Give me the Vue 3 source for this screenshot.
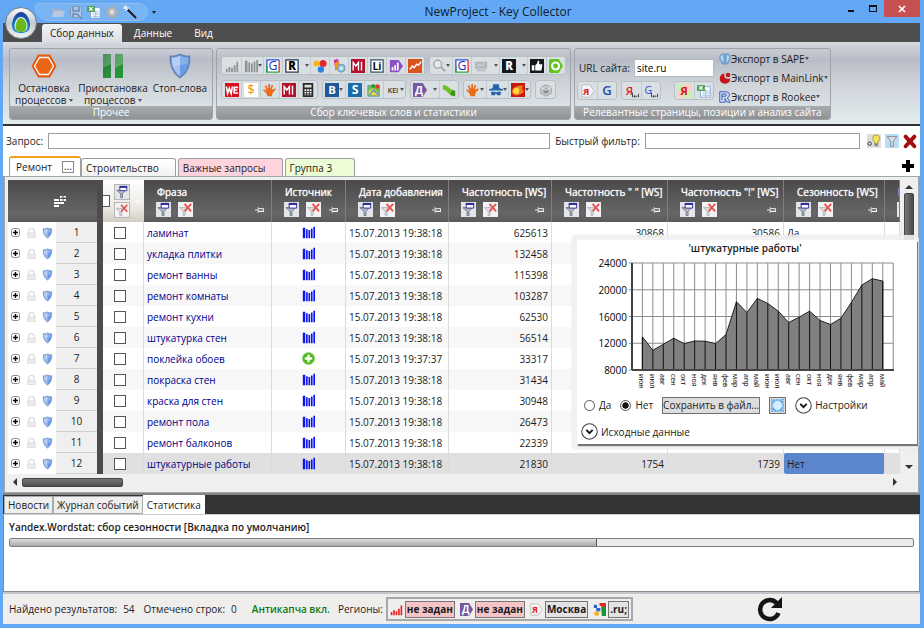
<template>
  <div class="window">
    <header class="titlebar">
      <button class="orb" aria-label="Меню"><Icon name="orb" /></button>
      <div class="quick">
        <button aria-label="Открыть"><Icon name="open" /></button>
        <button aria-label="Сохранить"><Icon name="save" /></button>
        <button aria-label="Экспорт"><Icon name="excel" /></button>
        <button aria-label="Настройки"><Icon name="gear" /></button>
        <button aria-label="Мастер"><Icon name="wand" /></button>
      </div>
      <button class="overflow" aria-label="Ещё"><i class="arrow"></i></button>
      <h1>NewProject - Key Collector</h1>
      <div class="controls">
        <button aria-label="Свернуть"><span class="min"></span></button>
        <button aria-label="Развернуть"><span class="max"></span></button>
        <button class="close" aria-label="Закрыть"><Icon name="close" /></button>
      </div>
    </header>

    <nav class="menu">
      <button class="active">Сбор данных</button>
      <button>Данные</button>
      <button>Вид</button>
    </nav>

    <section class="ribbon">
      <div class="group">
        <div class="group-body big">
          <button>
            <Icon name="stop" />
            <span>Остановка<br>процессов <i class="arrow"></i></span>
          </button>
          <button>
            <Icon name="pause" />
            <span>Приостановка<br>процессов <i class="arrow"></i></span>
          </button>
          <button>
            <Icon name="shield" />
            <span>Стоп-слова</span>
          </button>
        </div>
        <div class="caption">Прочее</div>
      </div>

      <div class="group">
        <div class="group-body tools">
          <div v-for="(row, r) in toolRows" :key="r" class="tool-row">
            <div v-for="(strip, s) in row" :key="s" class="strip">
              <button v-for="(item, t) in strip" :key="t" :class="item.kind" :aria-label="item.label">
                <Icon :name="item.icon" :class="item.tint" />
                <i v-if="item.kind" class="arrow"></i>
              </button>
            </div>
          </div>
        </div>
        <div class="caption">Сбор ключевых слов и статистики</div>
      </div>

      <div class="group">
        <div class="group-body site">
          <div class="site-left">
            <div class="url">
              <label for="site-url">URL сайта:</label>
              <input id="site-url" v-model="siteUrl" type="text">
            </div>
            <div class="tool-row">
              <div class="strip">
                <button aria-label="Яндекс"><Icon name="yandex" /></button>
                <button aria-label="Google"><Icon name="gplain" /></button>
              </div>
              <div class="strip">
                <button aria-label="Позиции Яндекс"><Icon name="yapos" /></button>
                <button aria-label="Позиции Google"><Icon name="gpos" /></button>
              </div>
              <div class="strip last">
                <button aria-label="Анализ"><Icon name="yagreen" /></button>
                <button aria-label="Excel"><Icon name="excel" /></button>
              </div>
            </div>
          </div>
          <div class="exports">
            <button v-for="item in exportsList" :key="item.icon">
              <Icon :name="item.icon" />{{ item.text }}<i class="arrow"></i>
            </button>
          </div>
        </div>
        <div class="caption">Релевантные страницы, позиции и анализ сайта</div>
      </div>
    </section>

    <div class="search">
      <label for="query">Запрос:</label>
      <input id="query" v-model="query" type="text" class="query">
      <label for="quick-filter">Быстрый фильтр:</label>
      <input id="quick-filter" v-model="quickFilter" type="text" class="quick-filter">
      <div class="search-tools">
        <button aria-label="Подсказка"><Icon name="bulb" /></button>
        <button aria-label="Фильтр"><Icon name="funnel" /></button>
        <button aria-label="Сбросить"><Icon name="cross" /></button>
      </div>
    </div>

    <div class="pages">
      <button class="page current">Ремонт <span class="dots">...</span></button>
      <button class="page">Строительство</button>
      <button class="page pink">Важные запросы</button>
      <button class="page green">Группа 3</button>
      <button class="add" aria-label="Добавить"><Icon name="plus" /></button>
    </div>

    <main class="frame">
      <div class="grid">
        <div class="pane">
          <table>
            <colgroup>
              <col class="c-tools">
              <col class="c-num">
              <col class="c-gap">
              <col class="c-check">
              <col class="c-phrase">
              <col class="c-source">
              <col class="c-date">
              <col class="c-freq">
              <col class="c-wide">
              <col class="c-wide">
              <col class="c-season">
              <col>
            </colgroup>
            <thead>
              <tr>
                <th colspan="2" class="corner"><Icon name="grouping" /></th>
                <th class="gap"></th>
                <th class="check-head">
                  <div class="check-box">
                    <input type="checkbox" aria-label="Выделить все">
                    <span class="stack">
                      <Icon name="filter" />
                      <Icon name="nofilter" />
                    </span>
                    <Icon name="pin" class="pale-pin" />
                  </div>
                </th>
                <th v-for="col in columns" :key="col">
                  <div class="head-text">{{ col }}</div>
                  <div class="head-tools">
                    <Icon name="filter" />
                    <Icon name="nofilter" />
                    <Icon name="pin" class="pin" />
                  </div>
                </th>
              </tr>
            </thead>
            <tbody>
              <tr v-for="(row, i) in rows" :key="row.phrase" :class="{ selected: i === 11 }">
                <td class="row-tools">
                  <span>
                    <Icon name="expand" class="expand" />
                    <Icon name="lock" class="lock" />
                    <Icon name="shield" class="shield" />
                  </span>
                </td>
                <td class="num">{{ i + 1 }}</td>
                <td class="gap"></td>
                <td class="check"><input type="checkbox" :aria-label="row.phrase"></td>
                <td class="phrase">{{ row.phrase }}</td>
                <td class="source"><Icon :name="row.added ? 'addsource' : 'bars2'" /></td>
                <td>{{ row.date }}</td>
                <td class="right">{{ row.ws }}</td>
                <td class="right">{{ row.quoted }}</td>
                <td class="right">{{ row.exact }}</td>
                <td :class="{ focus: i === 11 }">{{ row.season }}</td>
                <td></td>
              </tr>
            </tbody>
          </table>
        </div>
        <div class="vscroll">
          <i class="tri up"></i>
          <span class="vthumb"></span>
          <i class="tri down"></i>
        </div>
      </div>
      <div class="hscroll">
        <i class="tri left"></i>
        <span class="hthumb"></span>
        <i class="tri next"></i>
      </div>

      <aside class="popup">
        <div class="card">
          <h2>'штукатурные работы'</h2>
          <svg class="chart" viewBox="0 0 320 136" width="320" height="136">
            <g v-for="tick in yTicks" :key="tick">
              <line x1="40" x2="304" :y1="yPos(tick)" :y2="yPos(tick)" class="line" />
              <text x="38" :y="yPos(tick) + 4" class="y-label">{{ tick }}</text>
            </g>
            <line v-for="n in 25" :key="n" :x1="xPos(n - 1)" :x2="xPos(n - 1)" y1="6" y2="113" class="line" />
            <polygon :points="area" class="area" />
            <line v-for="n in 24" :key="'d' + n" :x1="xPos(n - 1)" :x2="xPos(n - 1)" :y1="yPos(history[n - 1])" y2="113" class="drop" />
            <line x1="43" x2="43" y1="6" y2="113" class="axis" />
            <line x1="43" x2="305" y1="113" y2="113" class="axis" />
            <text v-for="n in 24" :key="'m' + n" :transform="`translate(${xPos(n - 1) - 3} 117) rotate(90)`" class="x-label">{{ months[(n - 1) % 12] }}</text>
          </svg>
          <div class="options">
            <label><input v-model="seasonal" type="radio" value="yes">Да</label>
            <label><input v-model="seasonal" type="radio" value="no">Нет</label>
            <button class="save">Сохранить в файл...</button>
            <button class="fit" aria-label="Масштаб"><Icon name="fit" /></button>
            <button class="expander"><Icon name="chevron" />Настройки</button>
          </div>
          <button class="expander source-data"><Icon name="chevron" />Исходные данные</button>
        </div>
      </aside>
    </main>

    <nav class="bottom-tabs">
      <button>Новости</button>
      <button>Журнал событий</button>
      <button class="active">Статистика</button>
    </nav>
    <section class="stats">
      <p>Yandex.Wordstat: сбор сезонности [Вкладка по умолчанию]</p>
      <div class="progress"><span :style="{ width: progress + '%' }"></span></div>
    </section>

    <footer class="status">
      <span>Найдено результатов:</span><span class="count">54</span>
      <span>Отмечено строк:</span><span class="count">0</span>
      <strong>Антикапча вкл.</strong>
      <span>Регионы:</span>
      <div class="regions">
        <template v-for="(region, i) in regions" :key="i">
          <Icon :name="region.icon" :class="region.tint" />
          <button :class="{ unset: region.unset }">{{ region.text }}</button>
        </template>
      </div>
      <button class="refresh" aria-label="Обновить"><Icon name="refresh" /></button>
    </footer>
  </div>
</template>

<script setup>
import { ref, computed, h } from 'vue';

const letter = (text, size, fill, x = 8, y = 13, weight = 700) =>
  `<text x="${x}" y="${y}" text-anchor="middle" font-size="${size}" font-weight="${weight}" fill="${fill}">${text}</text>`;

// Most icons use a 16x16 box, the others bring their own
const boxes = {
  orb: '0 0 32 32',
  stop: '0 0 26 26',
  pause: '0 0 26 26',
  refresh: '0 0 26 26',
  shield: '0 0 16 20',
  open: '0 0 14 14',
  save: '0 0 14 14',
  gear: '0 0 14 14',
  wand: '0 0 14 14',
  plus: '0 0 14 14',
  fit: '0 0 14 14',
  grouping: '0 0 12 12',
  pin: '0 0 10 8',
  expand: '0 0 9 9',
  close: '0 0 8 8',
};

const icons = {
  orb: `<linearGradient id="orbFill" x2="0" y2="1"><stop offset="0" stop-color="#fdfdfd"/><stop offset=".5" stop-color="#c4cad2"/><stop offset="1" stop-color="#f2f4f6"/></linearGradient>
    <linearGradient id="eggFill" x2="0" y2="1"><stop offset="0" stop-color="#1c3f9c"/><stop offset="1" stop-color="#1593cc"/></linearGradient>
    <circle cx="16" cy="16" r="15.5" fill="url(#orbFill)" stroke="#6f7a88"/>
    <path fill="url(#eggFill)" d="M16 5c5 0 9 7 9 13s-4 8-9 8-9-2-9-8S11 5 16 5z"/>
    <path fill="#e9f4fa" d="M16 10c4 0 6.500 5 6.500 9s-2.500 6-6.500 6-6.500-2-6.500-6S12 10 16 10z"/>
    <path fill="#69b61f" d="M16 11c3 0 5.500 4 5.500 8S19 25 16 25s-5.500-1-5.500-5 2.500-9 5.500-9z"/>`,
  open: '<path fill="#9bb4d2" d="M1 3h4l1 1h6v8H1z"/><path fill="#b5cae2" d="M3 6h11l-2 6H1z"/>',
  save: '<path fill="#a9c6e6" stroke="#7d9cc2" d="M1.500 1.500h11v11h-11z"/><path stroke="#6f8bb0" stroke-width="1.500" fill="none" d="M4 2v4h6V2M4 12V9h4M8 9l5 5"/>',
  gear: '<circle cx="7" cy="7" r="5.500" fill="none" stroke="#a7adae" stroke-width="2.500" stroke-dasharray="2.300 1.200"/><circle cx="7" cy="7" r="3.300" fill="#dfe6ea" stroke="#b4babc" stroke-width="2.500"/>',
  wand: '<path stroke="#1c1c1c" stroke-width="2" d="M4 4l9 9"/><path stroke="#fff" d="M3 0v6M0 3h6M1 1l4 4"/>',
  close: '<path stroke="#fff" stroke-width="1.600" d="M1 1l6 6M7 1L1 7"/>',
  stop: '<path fill="#e8590c" d="M7 1.500h12L25.500 13 19 24.500H7L.5 13z"/><path fill="#ea6416" stroke="#fff" stroke-width="1.300" d="M8.500 4.500h9L22.500 13l-5 8.500h-9L3.500 13z"/>',
  pause: `<linearGradient id="pauseFill" x2="1" y2="1"><stop offset="0" stop-color="#1a6b2c"/><stop offset=".5" stop-color="#2f8c40"/><stop offset="1" stop-color="#1c9a34"/></linearGradient>
    <path fill="url(#pauseFill)" d="M3 1h8v24H3zM15 1h8v24h-8z"/><path fill="#fff" opacity=".22" d="M3 1h8v10l-8 4zM15 1h8v10l-8 4z"/>`,
  shield: `<path fill="#6b9be4" stroke="#5c7fb4" d="M8 1q4 2 7.500 1.500Q16 14 8 19 0 14 .5 2.500 4 3 8 1z"/>
    <path fill="#fff" opacity=".4" d="M8 2v16Q1.500 13 1.500 3.500 5 4 8 2z"/><path fill="#fff" opacity=".2" d="M2 3.500Q6 4 8 2q3 2 6 1.500V8L2 11z"/>`,
  bars: '<path fill="currentColor" d="M1 11h2v4H1zM4 9h2v6H4zM7 10h2v5H7zM10 7h2v8h-2zM13 3h2v12h-2z"/>',
  bars2: '<path fill="currentColor" d="M1 2h3v13H1zM5 4h2v11H5zM8 5h2v10H8zM11 3h2v12h-2zM14 1h2v14h-2z"/>',
  google: `<path fill="#fff" d="M1 1h14v14H1z"/><path fill="none" stroke="#2f55d4" stroke-width="1.500" d="M15 1H1v14"/>
    <path fill="none" stroke="#2aa64a" stroke-width="1.500" d="M1 8v7h14"/><path stroke="#cf3b35" stroke-width="1.500" d="M15 1v14"/>${letter('G', 14, '#1a2fb8', 8, 13, 400)}`,
  r: `<path fill="#fff" stroke="#24384c" stroke-width="1.400" d="M1 1h14v14H1z"/>${letter('R', 13, '#000', 8, 13, 800)}`,
  rdark: `<path fill="#101820" d="M0 0h16v16H0z"/>${letter('R', 13, '#fff', 8, 13, 800)}`,
  dots: '<circle cx="4" cy="5" r="3.400" fill="#f8b414"/><circle cx="11.500" cy="5" r="4" fill="#e02a2a"/><circle cx="9" cy="12" r="3.600" fill="#2f7fe0"/>',
  palette: '<path fill="#d0318e" d="M2 1l5-1 2 9-5 4z"/><path fill="#f09a18" d="M3 5l4-3 2 8-5 3z"/><circle cx="10.500" cy="10.500" r="4.500" fill="#9cc5e4" stroke="#5a8cae"/><circle cx="10.500" cy="10.500" r="1.500" fill="#dff"/>',
  mi: '<path fill="#b0122c" d="M0 0h16v16H0z"/><path fill="none" stroke="#fff" stroke-width="1.600" d="M2.500 13V4l3 4 3-4v9M12 3v10"/>',
  li: `<path fill="#fff" stroke="#355068" stroke-width="1.400" d="M1 1h14v14H1z"/>${letter('Li', 12, '#111')}`,
  metrika: '<path fill="#8a4fc4" d="M1 1h10l5 7-5 7H1z"/><path fill="#fff" d="M3 9h2v4H3zM6 7h2v6H6zM9 4h2v9H9z"/>',
  trend: '<path fill="#d9541c" d="M0 0h16v16H0z"/><path fill="none" stroke="#fff" stroke-width="1.600" d="M2 12l3-4 2 2 3-4 2 1 3-4"/>',
  search: '<circle cx="6.500" cy="6" r="4.500" fill="#e6eaec" stroke="#a4a8ac" stroke-width="1.600"/><path stroke="#a4a8ac" stroke-width="2.400" d="M10 9l5 5"/>',
  faded: '<path fill="#b4b9bd" d="M1 3h14v8H1zM3 12h10v2H3z"/><path fill="none" stroke="#e3e7e9" d="M3 9l3-3 2 2 4-3"/>',
  thumb: '<path fill="#15181b" d="M0 0h16v16H0z"/><path fill="#fff" d="M2 7h3v6H2zM6 7l2-2 1-3h1.500v4H14v2l-1 5H6z"/>',
  target: '<path fill="#62c41a" d="M0 2q0-2 2-2h9l5 8-5 8H2q-2 0-2-2z"/><circle cx="7.500" cy="8" r="4" fill="none" stroke="#fff" stroke-width="2.400"/>',
  we: '<path fill="#d8101e" d="M0 0h16v16H0z"/><path fill="none" stroke="#fff" stroke-width="1.800" d="M1.500 4l1.500 8 2-6 2 6L8.500 4M15 5h-4.500v6.500H15M10.500 8H14"/>',
  dollar: `<path fill="#fff" d="M0 0h16v16H0z"/>${letter('$', 15, '#f08a10', 8, 13, 400)}`,
  hand: '<path fill="#ec6a14" d="M5 15L4 12 0 8l1-1 3 2-2-6 1.500-.5L6 7V1h2v6l2-5 1.500.5L10 8l4-2 .5 1.500L11 11l-1 4z"/>',
  calc: '<path fill="#2a2a2a" d="M2 0h12v16H2z"/><path fill="#d9e2d4" d="M4 2h8v3H4z"/><path fill="#fff" d="M4 7h2v2H4zM7 7h2v2H7zM10 7h2v2h-2zM4 10h2v2H4zM7 10h2v2H7zM10 10h2v2h-2zM4 13h2v1H4zM7 13h2v1H7zM10 13h2v1h-2z"/>',
  b: `<path fill="#1f5a98" d="M0 0h16v16H0z"/>${letter('B', 13, '#fff')}`,
  s: `<path fill="#1a6cab" d="M0 0h16v16H0z"/>${letter('S', 14, '#fff')}`,
  map: '<path fill="#7cc142" stroke="#4a8fc0" d="M1 3h13v12H1z"/><path fill="#f3d348" d="M2 9l5-3 6 5v3H2z"/><path fill="none" stroke="#4a8fd8" stroke-width="1.500" d="M3 14l4-6 6 5"/><circle cx="7" cy="3.500" r="2.500" fill="#2f9e3a"/><circle cx="12" cy="4" r="2.500" fill="#e33a2e"/>',
  kei: letter('KEI', 8, '#333', 8, 11, 600),
  direct: `<path fill="#76569e" d="M0 0h11l5 8-5 8H0z"/>${letter('Д', 12, '#fff', 7, 12)}`,
  leaf: '<path fill="#6cc424" d="M1 2q5 1 8 4 3 3 6 3v6q-5 0-8-4-3-3-6-4z"/><path fill="#3d9416" d="M9 13q3 2 6 2V9l-3-1z"/>',
  spy: '<path fill="#2166ae" d="M4 6l1-5h2l1 1 1-1h2l1 5 4 1v1.500H0V7zM2 10h5l1 1 1-1h5l-1 4H9.500L8 12l-1.500 2H3z"/>',
  fire: '<path fill="#c31a12" d="M0 0h16v16H0z"/><path fill="#f6791a" d="M1 9q3-7 14-6-3 1-2 4l2 3q-5 5-10 4-4-1-4-5z"/><circle cx="6" cy="9" r="3.500" fill="#ffd744"/>',
  box: '<path fill="#c6cacd" stroke="#9a9ea2" d="M8 2l6 3v7l-6 3-6-3V5z"/><circle cx="8" cy="9" r="3" fill="#8d9195"/><path stroke="#eee" d="M2 5l6 3 6-3" fill="none"/>',
  yandex: `<path fill="#f6f6f6" stroke="#b9b9b9" d="M1 1h9l5 7-5 7H1z"/>${letter('Я', 11, '#e01c1c', 6, 12)}`,
  gplain: letter('G', 15, '#1c4fa8', 8, 13, 600),
  yapos: `${letter('Я', 13, '#e01c1c', 5, 12, 600)}<path fill="#333" d="M8 10h1v5H8zM10 13h2v2h-2zM13 13h1v2h-1zM15 11h1v4h-1z"/>`,
  gpos: `${letter('G', 12, '#2c4ee0', 5, 11, 400)}<path fill="#333" d="M8 10h1v5H8zM10 13h2v2h-2zM13 13h1v2h-1zM15 11h1v4h-1z"/>`,
  yagreen: `<path fill="#fbd0c8" d="M0 0h16v16H0z"/><path fill="#c9f0b0" d="M0 0h8v8H0zM8 8h8v8H8z"/>${letter('Я', 13, '#d8141c')}`,
  excel: '<path fill="#fff" stroke="#7fa6d4" d="M4 3h11v12H4z"/><path stroke="#9dbbe0" d="M6 8h8M6 10.500h8M6 13h8M10 6v9"/><path fill="#4fa458" d="M0 1h9v7H0z"/><path stroke="#fff" stroke-width="1.400" d="M2.500 2.500l4 4M6.500 2.500l-4 4"/>',
  sape: '<path fill="#8fc0e8" stroke="#4a84bc" d="M7 1Q1 1 1 6q0 3 2 5 0 4 4 4zM9 1q6 0 6 5 0 3-2 5 0 4-4 4z"/><path fill="none" stroke="#eef6fd" d="M4 4v4l2 2M12 4v4l-2 2"/>',
  mainlink: '<path fill="#c4141c" d="M7 2v4q1 3 4 3h4q0 6-7 6.500Q1 15 1 9q0-6 6-7z"/><circle cx="12" cy="4" r="3" fill="#c4141c"/>',
  rookee: '<path fill="none" stroke="#3b62c4" stroke-width="1.300" d="M1 1h8q5 0 5 4 0 3-3 4l4 6h-4L8 10v5H1zM4 4v8M4 4h4q2 0 2 1.500T8 7H4"/>',
  bulb: '<path fill="#dedede" d="M0 0h16v16H0z"/><path fill="#f7e25c" stroke="#a89438" d="M10.500 1q4 0 4 4 0 2-2 4v2h-4V9q-2-2-2-4 0-4 4-4z"/><path fill="#888" d="M8.500 11h4v3h-4z"/><circle cx="3" cy="11" r="2" fill="none" stroke="#222"/>',
  funnel: '<path fill="#b8def4" d="M0 0h16v16H0z"/><path fill="#dfe3e6" stroke="#7c858c" d="M2.500 3h11l-4 5v6h-3V8z"/>',
  cross: '<path stroke="#a30d10" stroke-width="4.500" stroke-linecap="round" d="M3 3l10 11M13 3L3 14"/>',
  plus: '<path fill="#000" d="M5 1h4v4h4v4H9v4H5V9H1V5h4z"/>',
  grouping: '<path fill="#fff" d="M0 4h5v2H0zM0 7h5v2H0zM0 10h5v2H0zM6 1h6v2H6zM6 4h6v2H6zM5 7h5v2H5z"/><path stroke="#555" d="M9 0v6M7 3h5"/>',
  filter: '<path fill="#e4e6ec" d="M0 0h16v16H0z"/><path fill="#b9bdc8" stroke="#6c7282" d="M2 6h10L8.500 10v4.500h-2V10z"/><path fill="#f8f8ff" stroke="#2c2c94" d="M5.500 2.500h8v4h-8z"/><path fill="#2c2c94" d="M5 1h9v2H5z"/>',
  nofilter: '<path fill="#f2f2f4" d="M0 0h16v16H0z"/><path fill="#dcdee2" stroke="#b0b4ba" d="M1.500 6h9l-3 4v4.500h-2V10z"/><path stroke="#e4564e" stroke-width="2" d="M7 2l7 8M14 2l-7 8"/>',
  pin: '<path fill="none" stroke="currentColor" d="M0 4h3M3.500 1v6M4 2.500h5.500v3H4"/><path fill="currentColor" d="M4 5h6v1H4z"/>',
  expand: '<rect x=".5" y=".5" width="8" height="8" rx="2" fill="#fff" stroke="#888"/><path stroke="#000" stroke-width="1.400" d="M2 4.500h5M4.500 2v5"/>',
  lock: '<path fill="none" stroke="#d6d6d6" stroke-width="1.600" d="M4 8V5q0-3.500 4-3.500T12 5v3"/><path fill="#f1f1f1" stroke="#d2d2d2" d="M2.500 8h11v6.500h-11z"/><path stroke="#dcdcdc" d="M4 11h8"/>',
  addsource: '<circle cx="8" cy="8" r="7.500" fill="#4fb81e" stroke="#9bd67c"/><path fill="#fff" d="M6.500 3.500h3v3h3v3h-3v3h-3v-3h-3v-3h3z"/>',
  fit: '<path fill="#4d9fe0" d="M0 0h14v14H0z"/><circle cx="7" cy="7" r="5" fill="#d5ecfb"/><path stroke="#fff" fill="none" stroke-dasharray="2 1" d="M1 1h12v12H1z"/>',
  chevron: '<circle cx="8" cy="8" r="7.300" fill="#fff" stroke="#444"/><path fill="none" stroke="#111" stroke-width="1.800" d="M5 6.500l3 3 3-3"/>',
  geo: '<path fill="#2a62d8" d="M1 2h4v4H1zM4 6h5v4H4z"/><path fill="#e02a22" d="M8 0h8v5h-4L8 3z"/><path fill="#18963a" d="M10 5h6v11h-5z"/><circle cx="4.500" cy="13" r="3" fill="#f0b21c"/>',
  refresh: '<path fill="none" stroke="#151515" stroke-width="4.500" d="M20 7.500A9.500 9.500 0 1 0 21.500 17"/><path fill="#151515" d="M25 1v11H14z"/>',
};

const Icon = (props) => h('svg', { viewBox: boxes[props.name] || '0 0 16 16', innerHTML: icons[props.name] });
Icon.props = ['name'];

const siteUrl = ref('site.ru');
const query = ref('');
const quickFilter = ref('');
const seasonal = ref('no');
const progress = 65;

const tool = (icon, label, kind = '', tint = '') => ({ icon, label, kind, tint });

const toolRows = [
  [
    [
      tool('bars', 'Wordstat', '', 'gray'),
      tool('bars2', 'Частотность', 'tight', 'gray'),
      tool('google', 'Google'),
      tool('r', 'Rambler', 'split'),
      tool('dots', 'Подсказки'),
      tool('palette', 'Рекомендации'),
      tool('mi', 'Mail'),
      tool('li', 'LiveInternet'),
      tool('metrika', 'Метрика'),
      tool('trend', 'Тренды'),
    ],
    [
      tool('search', 'Поиск', 'tight'),
      tool('google', 'Google'),
      tool('faded', 'Картинки', 'split'),
      tool('rdark', 'Rookee', 'split'),
      tool('thumb', 'Оценка'),
      tool('target', 'Цель'),
    ],
  ],
  [
    [
      tool('we', 'Webeffector'),
      tool('dollar', 'Бюджет'),
      tool('hand', 'Ручной сбор'),
      tool('mi', 'Mail'),
      tool('calc', 'Калькулятор'),
    ],
    [
      tool('b', 'Begun', 'tight'),
      tool('s', 'Seo'),
      tool('map', 'Карта'),
      tool('kei', 'KEI', 'tight'),
    ],
    [
      tool('direct', 'Директ', 'split'),
      tool('leaf', 'Лист'),
    ],
    [
      tool('hand', 'Сбор', 'tight'),
      tool('spy', 'SpyWords', 'tight'),
      tool('fire', 'Комета', 'tight'),
    ],
    [tool('box', 'Пакет')],
  ],
];

const exportsList = [
  { icon: 'sape', text: 'Экспорт в SAPE' },
  { icon: 'mainlink', text: 'Экспорт в MainLink' },
  { icon: 'rookee', text: 'Экспорт в Rookee' },
];

const columns = [
  'Фраза',
  'Источник',
  'Дата добавления',
  'Частотность [WS]',
  'Частотность " " [WS]',
  'Частотность "!" [WS]',
  'Сезонность [WS]',
  'N',
];

const rows = [
  { phrase: 'ламинат', date: '15.07.2013 19:38:18', ws: 625613, quoted: 30868, exact: 30586, season: 'Да' },
  { phrase: 'укладка плитки', date: '15.07.2013 19:38:18', ws: 132458 },
  { phrase: 'ремонт ванны', date: '15.07.2013 19:38:18', ws: 115398 },
  { phrase: 'ремонт комнаты', date: '15.07.2013 19:38:18', ws: 103287 },
  { phrase: 'ремонт кухни', date: '15.07.2013 19:38:18', ws: 62530 },
  { phrase: 'штукатурка стен', date: '15.07.2013 19:38:18', ws: 56514 },
  { phrase: 'поклейка обоев', date: '15.07.2013 19:37:37', ws: 33317, added: true },
  { phrase: 'покраска стен', date: '15.07.2013 19:38:18', ws: 31434 },
  { phrase: 'краска для стен', date: '15.07.2013 19:38:18', ws: 30948 },
  { phrase: 'ремонт пола', date: '15.07.2013 19:38:18', ws: 26473 },
  { phrase: 'ремонт балконов', date: '15.07.2013 19:38:18', ws: 22339 },
  { phrase: 'штукатурные работы', date: '15.07.2013 19:38:18', ws: 21830, quoted: 1754, exact: 1739, season: 'Нет' },
];

const regions = [
  { icon: 'bars', text: 'не задан', unset: true, tint: 'red' },
  { icon: 'direct', text: 'не задан', unset: true },
  { icon: 'yandex', text: 'Москва' },
  { icon: 'geo', text: '.ru;' },
];

// Seasonality chart
const yTicks = [24000, 20000, 16000, 12000, 8000];
const months = ['июн', 'июл', 'авг', 'сен', 'окт', 'ноя', 'дек', 'янв', 'фев', 'мар', 'апр', 'май'];
const history = [
  12950, 10950, 11850, 12750, 11950, 12350, 12300, 11950, 13300, 18200, 16600, 18700,
  17950, 16800, 15100, 15900, 16800, 15400, 14800, 15750, 18100, 20700, 21650, 21300,
];

const xPos = (index) => 53.4 + index * 10.45;
const yPos = (value) => 113 - ((value - 8000) / 16000) * 107;

const area = computed(() => {
  const top = history.map((value, i) => `${xPos(i)},${yPos(value)}`);
  return [`${xPos(0)},113`, ...top, `${xPos(23)},113`].join(' ');
});
</script>

<style>
body {
  margin: 0;
}
</style>

<style scoped>
.window {
  display: flex;
  flex-direction: column;
  min-height: 100vh;
  box-sizing: border-box;
  padding: 0 4px 4px 3px;
  background: #62a8f5;
  color: #1c1c1c;
  font-family: "Open Sans", "Noto Sans", sans-serif;
  font-size: 10px;
  line-height: 12px;
}

button {
  margin: 0;
  padding: 0;
  border: 0;
  background: none;
  color: inherit;
  font: inherit;
}

input {
  box-sizing: border-box;
  margin: 0;
  font: inherit;
}

svg {
  display: block;
  flex: none;
  overflow: visible;
}

.arrow {
  display: inline-block;
  flex: none;
  border: 2px solid transparent;
  border-top: 3px solid #555;
  border-bottom: 0;
  vertical-align: 2px;
}

/* Title bar */
.titlebar {
  position: relative;
  display: flex;
  align-items: center;
  height: 23px;
}

.orb {
  position: absolute;
  left: 2px;
  top: 7px;
  z-index: 2;
}

.orb svg {
  width: 32px;
  height: 32px;
}

.quick {
  display: flex;
  align-items: center;
  gap: 4px;
  height: 16px;
  margin-left: 32px;
  padding: 0 10px 0 15px;
  border: 1px solid #8fbdf0;
  border-radius: 4px 9px 9px 14px;
  background: #78b3f3;
}

.quick svg {
  width: 14px;
  height: 14px;
}

.overflow {
  margin-left: 4px;
}

.overflow .arrow {
  border-top-color: #222;
}

h1 {
  flex: 1;
  margin: 0;
  color: #10202f;
  font-size: 12px;
  font-weight: 400;
  text-align: center;
}

.controls {
  display: flex;
  align-self: flex-start;
  height: 17px;
}

.controls button {
  display: flex;
  align-items: center;
  justify-content: center;
  width: 22px;
}

.controls .close {
  width: 36px;
  background: #c75050;
}

.close svg {
  width: 8px;
  height: 8px;
}

.min {
  width: 6px;
  height: 2px;
  margin-top: 4px;
  background: #111;
}

.max {
  width: 6px;
  height: 4px;
  border: 1px solid #111;
  border-top-width: 2px;
}

/* Ribbon */
.menu {
  display: flex;
  align-items: flex-end;
  height: 19px;
  padding-left: 39px;
  background: #4e4e4e;
  color: #fff;
}

.menu button {
  height: 18px;
  padding: 0 11px;
}

.menu .active {
  margin-right: 1px;
  padding: 0 8px;
  border-radius: 3px 3px 0 0;
  background: linear-gradient(#f2f4f6, #dadde3);
  color: #1c1c1c;
}

.ribbon {
  display: flex;
  gap: 3px;
  padding: 6px 6px 4px;
  border-bottom: 2px solid #333;
  background: linear-gradient(#d5d8df, #b8bcc6 22%, #ced3d9 50%, #e4ecee);
}

.group {
  display: flex;
  flex-direction: column;
  box-sizing: border-box;
  height: 72px;
  border: 1px solid #9ea3a8;
  border-radius: 3px;
  overflow: hidden;
}

.group-body {
  flex: 1;
}

.caption {
  height: 13px;
  background: linear-gradient(#a9acae, #8f9294);
  color: #fff;
  text-align: center;
}

.big {
  display: flex;
  align-items: flex-start;
  gap: 5px;
  padding: 4px 5px 0;
}

.big button {
  display: flex;
  flex-direction: column;
  align-items: center;
  gap: 3px;
}

.big svg {
  width: 26px;
  height: 26px;
}

.tools {
  display: flex;
  flex-direction: column;
  gap: 5px;
  padding: 7px 4px 0;
}

.tool-row {
  display: flex;
  gap: 4px;
}

.strip {
  display: flex;
  height: 17px;
  border: 1px solid #b9c0c4;
  border-radius: 3px;
  background: #d9dfe2;
}

.strip button {
  display: flex;
  align-items: center;
  justify-content: center;
  box-sizing: border-box;
  width: 19px;
}

.strip button + button {
  border-left: 1px solid #c4cbcf;
}

.strip .tight {
  width: 22px;
}

.strip .split {
  gap: 6px;
  width: 28px;
}

.strip svg {
  width: 14px;
  height: 14px;
}

.gray {
  color: #8d9296;
}

.site {
  display: flex;
  gap: 5px;
  padding: 0 2px;
}

.site-left {
  display: flex;
  flex-direction: column;
  gap: 4px;
  padding-top: 10px;
}

.url {
  display: flex;
  align-items: center;
  gap: 4px;
  padding-left: 2px;
}

.url input {
  width: 80px;
  height: 18px;
  padding: 2px;
  border: 1px solid #b5bcc0;
  background: #fff;
}

.last {
  margin-left: auto;
}

.exports {
  display: flex;
  flex-direction: column;
  justify-content: space-around;
}

.exports button {
  display: flex;
  align-items: center;
}

.exports svg {
  width: 12px;
  height: 12px;
}

/* Search */
.search {
  display: flex;
  align-items: center;
  gap: 5px;
  height: 29px;
  padding: 0 3px;
  background: #fff;
}

.search input {
  height: 16px;
  border: 1px solid #9a9da2;
}

.query {
  flex: 505;
  min-width: 0;
}

.quick-filter {
  flex: 213;
  min-width: 0;
}

.search-tools {
  display: flex;
  gap: 4px;
  padding-left: 2px;
}

.search-tools svg {
  width: 14px;
  height: 14px;
}

.pages {
  display: flex;
  align-items: flex-end;
  gap: 2px;
  height: 21px;
  padding: 0 5px 0 6px;
  background: #fff;
}

.page {
  box-sizing: border-box;
  height: 18px;
  padding: 0 16px 0 4px;
  border: 1px solid #9a9fa3;
  border-bottom: 0;
  border-radius: 3px 3px 0 0;
  background: linear-gradient(#fff, #f1f3f0);
}

.current {
  display: flex;
  align-items: center;
  gap: 10px;
  height: 20px;
  margin-right: -2px;
  padding: 0 6px;
  border-top: 2px solid #f0a11c;
  background: #fff;
}

.dots {
  width: 10px;
  height: 10px;
  border: 1px solid #888;
  line-height: 8px;
}

.pink {
  background: #ffd3dc;
}

.green {
  padding-right: 22px;
  background: #ebfcd6;
}

.add {
  align-self: center;
  margin-left: auto;
}

.add svg {
  width: 14px;
  height: 14px;
}

/* Grid */
.frame {
  position: relative;
  margin: 0 1px;
  padding: 3px 1px 2px 3px;
  border: 1px solid #9caaa8;
  background: #efefef;
}

.grid {
  display: flex;
}

.pane {
  flex: 1;
  min-width: 0;
  overflow: hidden;
}

table {
  width: 100%;
  table-layout: fixed;
  border-collapse: separate;
  border-spacing: 0;
}

.c-tools {
  width: 48px;
}

.c-num {
  width: 41px;
}

.c-gap {
  width: 6px;
}

.c-check {
  width: 41px;
}

.c-phrase {
  width: 128px;
}

.c-source {
  width: 74px;
}

.c-date,
.c-freq {
  width: 103px;
}

.c-wide {
  width: 116px;
}

.c-season {
  width: 101px;
}

th {
  box-sizing: border-box;
  height: 42px;
  padding: 0 7px 0 12px;
  border-right: 1px solid #808080;
  background: linear-gradient(#4a4a4a, #666 80%, #5a5a5a);
  color: #fff;
  font-weight: 400;
  text-align: left;
  white-space: nowrap;
  overflow: hidden;
}

.head-text {
  padding-left: 1px;
  text-shadow: 0 0 1px #fff;
}

.corner {
  border-right: 0;
}

.corner svg {
  width: 12px;
  height: 12px;
  margin-left: 34px;
}

.gap,
th.gap {
  padding: 0;
  border: 0;
  background: #4c4c4c;
}

.check-head {
  padding: 0;
  border: 0;
  background: linear-gradient(#fff, #e9e6e0 70%, #d2cdc4);
}

.check-box {
  display: flex;
  align-items: center;
  gap: 5px;
}

.stack {
  display: grid;
  gap: 4px;
}

.stack svg {
  width: 14px;
  height: 14px;
  outline: 1px solid #b4b4b4;
}

.check-head input {
  flex: none;
  margin-left: -5px;
}

.pale-pin {
  width: 8px;
  height: 7px;
  color: #fafafa;
}

.head-tools {
  display: flex;
  align-items: center;
  gap: 7px;
  margin-top: 4px;
}

.head-tools svg {
  width: 15px;
  height: 15px;
}

.head-tools .pin {
  width: 9px;
  height: 8px;
  margin: 2px 0 0 auto;
}

td {
  box-sizing: border-box;
  height: 21px;
  padding: 0 3px;
  border-right: 1px solid #dcdcdc;
  background: #fff;
  white-space: nowrap;
}

tbody tr:nth-child(even) td {
  background: #f7f7f7;
}

tbody tr.selected td {
  background: #e0e0e0;
}

tbody tr .row-tools,
tbody tr:nth-child(even) .row-tools,
tbody tr.selected .row-tools {
  border: 0;
  background: #fff;
}

.row-tools span {
  display: flex;
  align-items: center;
  gap: 6px;
}

.expand {
  width: 9px;
  height: 9px;
}

.lock {
  width: 11px;
  height: 12px;
}

.shield {
  width: 9px;
  height: 12px;
}

tbody tr td.num,
tbody tr:nth-child(even) td.num,
tbody tr.selected td.num {
  border-right: 0;
  border-bottom: 1px solid #cfcfcf;
  background: #efefef;
  text-align: center;
}

tbody tr td.gap,
tbody tr:nth-child(even) td.gap,
tbody tr.selected td.gap {
  background: #4c4c4c;
}

input[type="checkbox"] {
  display: block;
  width: 12px;
  height: 12px;
  border: 1px solid #555;
  background: #fff;
  appearance: none;
}

.check input {
  margin-left: 8px;
}

.phrase {
  color: #00008b;
}

.source svg {
  width: 13px;
  height: 13px;
  margin: 0 auto;
  color: #0a14f0;
}

.right {
  text-align: right;
}

tbody tr.selected td.focus {
  border-radius: 2px;
  background: #5b86cc;
}

.vscroll {
  display: flex;
  flex-direction: column;
  align-items: center;
  gap: 4px;
  width: 17px;
  padding: 5px 0;
}

.vthumb {
  width: 8px;
  height: 150px;
  border: 1px solid #444;
  border-radius: 2px;
  background: linear-gradient(90deg, #777, #4a4a4a);
}

.tri {
  border: 4px solid transparent;
}

.up {
  border-top: 0;
  border-bottom-color: #333;
}

.down {
  margin-top: auto;
  border-bottom: 0;
  border-top-color: #333;
}

.left {
  border-left: 0;
  border-right-color: #333;
}

.next {
  margin: 0 20px 0 auto;
  border-right: 0;
  border-left-color: #333;
}

.hscroll {
  display: flex;
  align-items: center;
  gap: 5px;
  height: 16px;
  padding-left: 5px;
}

.hthumb {
  width: 11%;
  height: 7px;
  border: 1px solid #444;
  border-radius: 2px;
  background: linear-gradient(#757575, #505050);
}

/* Seasonality popup */
.popup {
  position: absolute;
  right: -1px;
  bottom: 43px;
  padding: 5px 2px 5px 5px;
  border-radius: 5px;
  background: rgba(240, 240, 240, 0.9);
  box-shadow: 0 0 1px #bbb;
}

.card {
  width: 328px;
  padding: 2px 8px 4px 4px;
  background: #fff;
  box-shadow: 1px 2px 1px #777;
}

h2 {
  margin: 0 0 3px;
  font-size: 10px;
  font-weight: 600;
  text-align: center;
}

.chart {
  margin-left: 8px;
}

.line {
  stroke: #8c8c8c;
}

.area {
  fill: #808080;
  stroke: #222;
}

.drop {
  stroke: #111;
}

.axis {
  stroke: #444;
  stroke-width: 2px;
}

.y-label {
  font-size: 10px;
  text-anchor: end;
}

.x-label {
  font-size: 7px;
}

.options {
  display: flex;
  align-items: center;
  gap: 9px;
  height: 24px;
  padding-left: 3px;
}

.options label {
  display: flex;
  align-items: center;
  gap: 4px;
}

input[type="radio"] {
  width: 11px;
  height: 11px;
  border: 1px solid #555;
  border-radius: 50%;
  background: #fff;
  appearance: none;
}

input[type="radio"]:checked {
  background: radial-gradient(#111 45%, #fff 55%);
}

.save,
.fit {
  height: 17px;
  border: 1px solid #707070;
  background: #ddd;
  white-space: nowrap;
}

.fit {
  padding: 0 1px;
}

.fit svg {
  width: 13px;
  height: 13px;
}

.expander {
  display: flex;
  align-items: center;
  gap: 3px;
  white-space: nowrap;
}

.expander svg {
  width: 17px;
  height: 17px;
}

.source-data {
  margin-top: 6px;
}

/* Bottom panel */
.bottom-tabs {
  display: flex;
  align-items: flex-end;
  height: 19px;
  padding-left: 1px;
  border-top: 2px solid #858585;
  background: #343434;
}

.bottom-tabs button {
  box-sizing: border-box;
  height: 18px;
  padding: 0 3px;
  border: 1px solid #aaa;
  background: #efefef;
}

.bottom-tabs .active {
  height: 19px;
  padding: 0 3px;
  border-color: #fff;
  background: #fff;
}

.stats {
  flex: 1;
  padding: 6px 5px;
  border: 1px solid #8b8b8b;
  border-top-color: #ccc;
  background: #fff;
}

.stats p {
  margin: 0 0 5px;
  font-weight: 600;
}

.progress {
  height: 7px;
  border: 1px solid #7d7d7d;
  border-radius: 2px;
  background: #ececec;
}

.progress span {
  display: block;
  box-sizing: border-box;
  height: 100%;
  border-right: 1px solid #555;
  background: linear-gradient(#ddd, #aaa);
}

.status {
  display: flex;
  align-items: center;
  height: 30px;
  padding-left: 6px;
  border-top: 2px solid #c4c4ca;
  background: #f0eded;
}

.count {
  margin: 0 9px 0 6px;
}

.status strong {
  margin: 0 8px 0 6px;
  color: #0a7a10;
  font-weight: 600;
}

.regions {
  display: flex;
  align-items: center;
  gap: 2px;
  height: 20px;
  margin-left: 3px;
  padding: 0 2px;
  border: 2px solid #a8a8a8;
}

.regions svg {
  width: 13px;
  height: 13px;
}

.regions button + svg {
  margin-left: 3px;
}

.regions button {
  height: 17px;
  padding: 0 1px;
  border: 1px solid #777;
  background: #e3e3e3;
  font-weight: 700;
}

.regions .unset {
  background: #f6c4c6;
}

.red {
  color: #e81c1c;
}

.refresh {
  margin-left: 124px;
}

.refresh svg {
  width: 26px;
  height: 26px;
}
</style>
